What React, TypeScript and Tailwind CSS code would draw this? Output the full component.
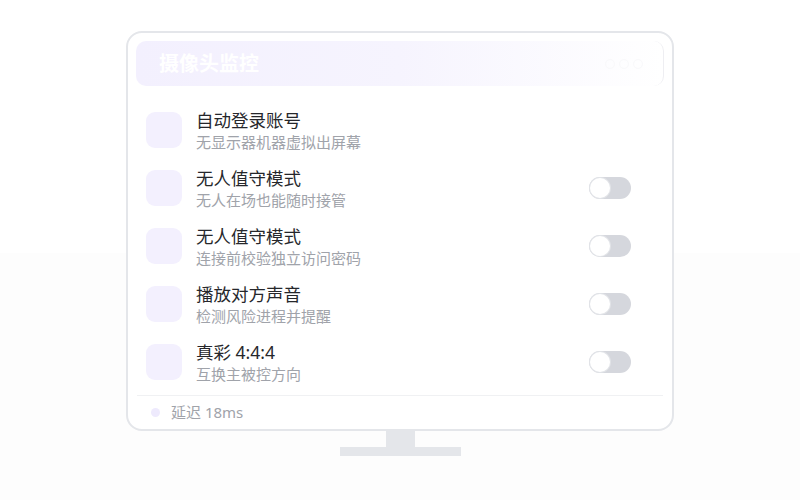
import React from 'react'

const rows = [
  { title: '自动登录账号', desc: '无显示器机器虚拟出屏幕', toggle: false },
  { title: '无人值守模式', desc: '无人在场也能随时接管', toggle: true },
  { title: '无人值守模式', desc: '连接前校验独立访问密码', toggle: true },
  { title: '播放对方声音', desc: '检测风险进程并提醒', toggle: true },
  { title: '真彩 4:4:4', desc: '互换主被控方向', toggle: true },
]

function Toggle() {
  return (
    <div className="relative h-[22px] w-[42px] rounded-full bg-[#d5d7dd]">
      <div className="absolute left-[1px] top-[1px] h-[20px] w-[20px] rounded-full bg-white shadow-[0_0_0_1px_#e2e4e8]" />
    </div>
  )
}

export default function App() {
  return (
    <div
      className="flex h-[500px] w-full flex-col items-center bg-[linear-gradient(to_bottom,#ffffff_253px,#fdfdfd_253px)] pt-[31px]"
      style={{ fontFamily: '"Noto Sans", "Noto Sans CJK SC", sans-serif' }}
    >
      {/* screen */}
      <div className="flex h-[400px] w-[548px] flex-col rounded-[16px] border-2 border-[#e4e6ea] bg-white px-[8px] pt-[8px]">
        <div className="flex h-[45px] shrink-0 items-center justify-between rounded-[10px] border-r border-[#eeeef2] bg-[linear-gradient(to_right,#f3f0fe,#f6f4fe_50%,#ffffff)] pl-[23px] pr-[20px]">
          <span className="text-[20px] font-bold text-white">摄像头监控</span>
          <span className="flex gap-[4px]">
            <span className="h-[10px] w-[10px] rounded-full border border-[#f9f9fb]" />
            <span className="h-[10px] w-[10px] rounded-full border border-[#f9f9fb]" />
            <span className="h-[10px] w-[10px] rounded-full border border-[#f9f9fb]" />
          </span>
        </div>

        <div className="mt-[15px] flex flex-col">
          {rows.map((r, i) => (
            <div key={i} className="flex h-[58px] items-center pl-[10px] pr-[33px]">
              <div className="h-[36px] w-[36px] shrink-0 rounded-[9px] bg-[#f3f0fe]" />
              <div className="ml-[14px] flex flex-1 flex-col">
                <span className="text-[17.5px] leading-[23px] text-[#26272b]">{r.title}</span>
                <span className="text-[15px] leading-[20px] text-[#a0a3aa]">{r.desc}</span>
              </div>
              {r.toggle && <Toggle />}
            </div>
          ))}
        </div>

        <div className="mx-[1px] mt-[4px] border-t border-[#f0f1f3]" />
        <div className="flex flex-1 items-center gap-[11px] pl-[15px]">
          <span className="h-[9px] w-[9px] rounded-full bg-[#eeeafd]" />
          <span className="text-[15px] text-[#a0a3aa]">延迟 18ms</span>
        </div>
      </div>
      {/* stand */}
      <div className="h-[16px] w-[29px] bg-[#e4e6ea]" />
      <div className="h-[9px] w-[121px] bg-[#e4e6ea]" />
    </div>
  )
}
